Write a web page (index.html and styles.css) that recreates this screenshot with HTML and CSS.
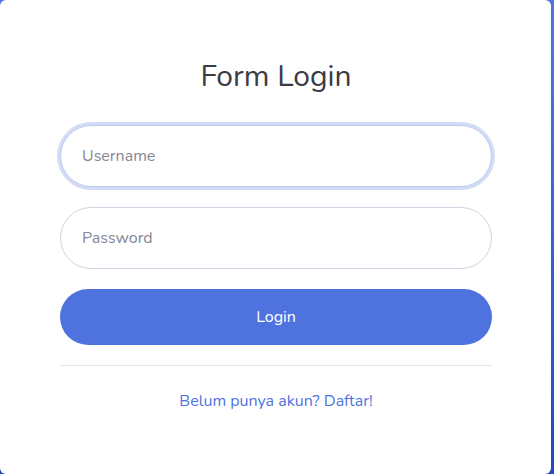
FILE: index.html
```html
<!DOCTYPE html>
<html lang="id">
<head>
<meta charset="utf-8">
<title>Form Login</title>
<link rel="stylesheet" href="styles.css">
</head>
<body>
<div class="card">
  <h1 class="title">Form Login</h1>
  <form class="form">
    <input class="field focused" type="text" placeholder="Username">
    <input class="field" type="password" placeholder="Password">
    <button class="btn" type="button">Login</button>
  </form>
  <hr class="divider">
  <div class="footer"><a class="link" href="#">Belum punya akun? Daftar!</a></div>
</div>
</body>
</html>
```
FILE: styles.css
```css
* { box-sizing: border-box; }
html, body { margin: 0; height: 100%; }
body {
  background: linear-gradient(180deg, #4e73df 10%, #224abe 100%);
  font-family: "Nunito", Lato, "Noto Sans", sans-serif;
  width: 554px;
  height: 474px;
  overflow: hidden;
}
.card {
  width: 551px;
  height: 474px;
  background: #fff;
  border-radius: 6px;
  padding: 58px 59px 0 60px;
}
.title {
  margin: 0 0 29px;
  text-align: center;
  font-weight: 400;
  font-size: 30px;
  line-height: 38px;
  color: #3a3b45;
}
.form { display: flex; flex-direction: column; }
.field {
  height: 62px;
  border: 1px solid #d1d3e2;
  border-radius: 10rem;
  padding: 0 21px;
  font-family: inherit;
  font-size: 16px;
  color: #6e707e;
  margin-bottom: 20px;
  outline: none;
}
.field::placeholder { color: #858796; }
.field.focused {
  border-color: #bac8f3;
  box-shadow: 0 0 0 3px rgba(78,115,223,.25);
}
.btn {
  height: 56px;
  border: none;
  border-radius: 10rem;
  background: #4e73df;
  color: #fff;
  font-family: inherit;
  font-size: 16px;
}
.divider {
  border: 0;
  border-top: 1px solid #e3e6f0;
  margin: 20px 0 24px;
}
.footer { text-align: center; }
.link {
  color: #4e73df;
  text-decoration: none;
  font-size: 16px;
}
```
